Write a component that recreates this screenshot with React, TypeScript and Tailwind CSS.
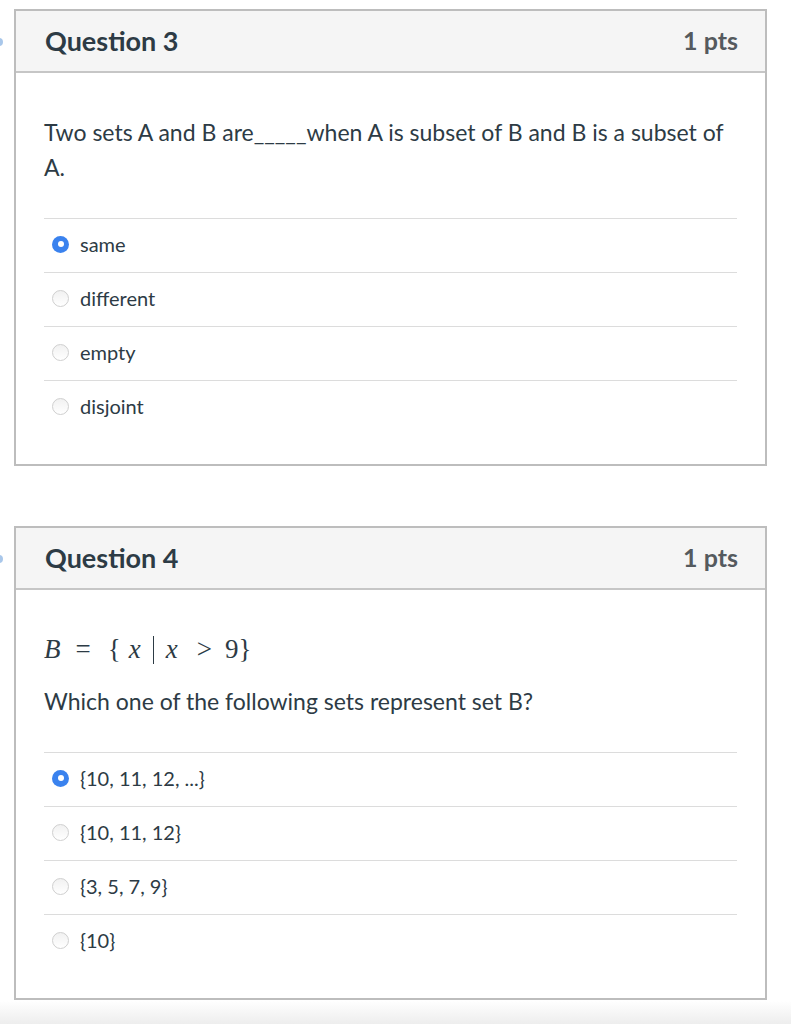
import React from 'react'

type Option = { label: string; selected?: boolean }

const q3: Option[] = [
  { label: 'same', selected: true },
  { label: 'different' },
  { label: 'empty' },
  { label: 'disjoint' },
]

const q4: Option[] = [
  { label: '{10, 11, 12, ...}', selected: true },
  { label: '{10, 11, 12}' },
  { label: '{3, 5, 7, 9}' },
  { label: '{10}' },
]

function Radio({ selected }: { selected?: boolean }) {
  if (selected) {
    return (
      <span className="flex h-[17px] w-[17px] items-center justify-center rounded-full bg-[#3a82ee]">
        <span className="h-[6px] w-[6px] rounded-full bg-white" />
      </span>
    )
  }
  return (
    <span className="h-[17px] w-[17px] rounded-full border border-[#cfcfcf] bg-gradient-to-b from-[#f1f1f1] to-white" />
  )
}

function Answers({ options }: { options: Option[] }) {
  return (
    <div>
      {options.map((o) => (
        <div key={o.label} className="flex h-[54px] items-center border-t border-[#dcdcdc] pb-[3px] pl-[8px]">
          <span className="flex w-[28px] items-center">
            <Radio selected={o.selected} />
          </span>
          <span className="text-[20px] text-[#2d3b45]">{o.label}</span>
        </div>
      ))}
    </div>
  )
}

function QuestionCard({ title, children }: { title: string; children: React.ReactNode }) {
  return (
    <div className="relative ml-[14px] w-[753px] border-2 border-[#bdbdbd] bg-white">
      <span className="absolute left-[-21px] top-[27px] h-[8px] w-[8px] rounded-full bg-[#a9c7ea]" />
      <div className="flex h-[62px] items-center justify-between border-b-2 border-[#c6c6c6] bg-[#f5f5f5] pl-[29px] pr-[27px]">
        <h2 className="text-[27px] font-bold text-[#2d3b45]">{title}</h2>
        <span className="text-[25px] font-bold text-[#555a5e]">1 pts</span>
      </div>
      <div className="px-[28px] pb-[30px] pt-[42px]">{children}</div>
    </div>
  )
}

export default function App() {
  return (
    <div className="min-h-[1024px] overflow-hidden bg-white pt-[9px] font-['Lato','Noto_Sans',sans-serif] text-[#2d3b45]">
      <QuestionCard title="Question 3">
        <p className="mb-[33px] text-[23px] leading-[35px]">
          Two sets A and B are_____when A is subset of B and B is a subset of A.
        </p>
        <Answers options={q3} />
      </QuestionCard>

      <div className="h-[60px]" />

      <QuestionCard title="Question 4">
        <div className="flex h-[35px] items-center font-['Liberation_Serif','DejaVu_Serif',serif] text-[27px] text-[#2d3b45]">
          <span className="italic">B</span>
          <span className="ml-[15px]">=</span>
          <span className="ml-[17px]">{'{'}</span>
          <span className="ml-[8px] italic">x</span>
          <span className="ml-[12px] h-[28px] w-[1px] bg-[#2d3b45]" />
          <span className="ml-[12px] italic">x</span>
          <span className="ml-[19px]">&gt;</span>
          <span className="ml-[13px]">9{'}'}</span>
        </div>
        <p className="mb-[33px] mt-[17px] text-[23px] leading-[35px]">
          Which one of the following sets represent set B?
        </p>
        <Answers options={q4} />
      </QuestionCard>

      <div className="mt-[1px] h-[26px] bg-gradient-to-b from-white to-[#ebebeb]" />
    </div>
  )
}
